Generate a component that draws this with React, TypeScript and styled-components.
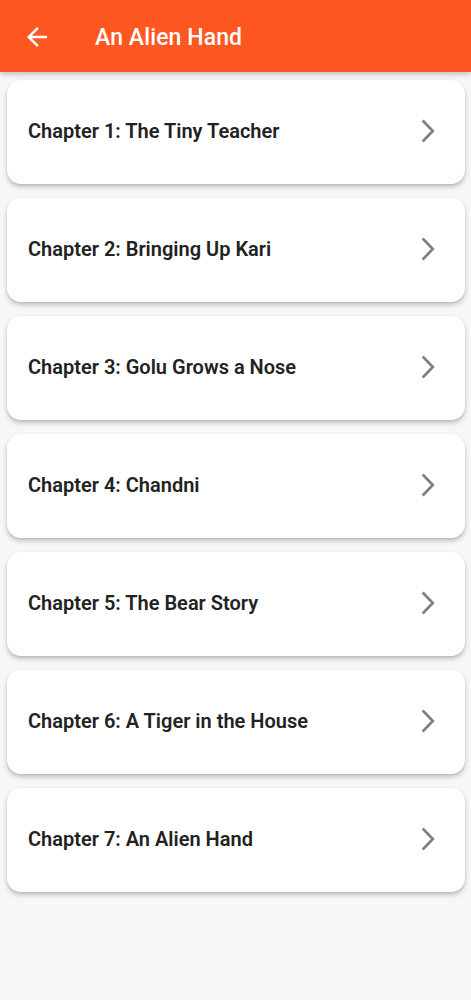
import React from "react";
import styled, { createGlobalStyle } from "styled-components";

const GlobalStyle = createGlobalStyle`
  html, body { margin: 0; padding: 0; background: #f8f6f8; }
  body { font-family: Roboto, "Noto Sans", "Liberation Sans", sans-serif; }
  * { box-sizing: border-box; }
`;

const Page = styled.div`
  min-height: 1000px;
  background: #f8f6f8;
  display: flex;
  flex-direction: column;
`;

const AppBar = styled.header`
  height: 72px;
  background: #ff5722;
  display: flex;
  align-items: center;
  padding-left: 22px;
  padding-top: 2px;
  box-shadow: 0 2px 6px rgba(0, 0, 0, 0.25);
  position: relative;
  z-index: 2;
`;

const BackButton = styled.button`
  width: 30px;
  height: 30px;
  padding: 0;
  border: none;
  background: transparent;
  display: flex;
  align-items: center;
  justify-content: center;
  margin-right: 43px;
`;

const Title = styled.h1`
  margin: 0;
  color: #ffffff;
  font-size: 23px;
  font-weight: 500;
  letter-spacing: 0.1px;
`;

const List = styled.main`
  display: flex;
  flex-direction: column;
  gap: 14px;
  padding: 8px 6px 0 7px;
`;

const Card = styled.div`
  height: 104px;
  background: #ffffff;
  border-radius: 14px;
  box-shadow: 0 3px 5px rgba(0, 0, 0, 0.22), 0 1px 2px rgba(0, 0, 0, 0.08);
  display: flex;
  align-items: center;
  justify-content: space-between;
  padding: 0 20px 2px 21px;
`;

const ChapterTitle = styled.span`
  font-size: 20px;
  font-weight: 600;
  color: #222222;
  letter-spacing: 0;
`;

const Chevron = () => (
  <svg width="34" height="34" viewBox="0 0 24 24">
    <path d="M8.9 5.3 L15.4 12 L8.9 18.7" fill="none" stroke="#808080" strokeWidth="1.9" strokeLinecap="square" />
  </svg>
);

const BackArrow = () => (
  <svg width="30" height="30" viewBox="0 0 24 24">
    <path d="M20 11H7.83l5.59-5.59L12 4l-8 8 8 8 1.41-1.41L7.83 13H20v-2z" fill="#ffffff" />
  </svg>
);

const chapters = [
  "Chapter 1: The Tiny Teacher",
  "Chapter 2: Bringing Up Kari",
  "Chapter 3: Golu Grows a Nose",
  "Chapter 4: Chandni",
  "Chapter 5: The Bear Story",
  "Chapter 6: A Tiger in the House",
  "Chapter 7: An Alien Hand",
];

export default function App() {
  return (
    <Page>
      <GlobalStyle />
      <AppBar>
        <BackButton aria-label="Back">
          <BackArrow />
        </BackButton>
        <Title>An Alien Hand</Title>
      </AppBar>
      <List>
        {chapters.map((c) => (
          <Card key={c}>
            <ChapterTitle>{c}</ChapterTitle>
            <Chevron />
          </Card>
        ))}
      </List>
    </Page>
  );
}
